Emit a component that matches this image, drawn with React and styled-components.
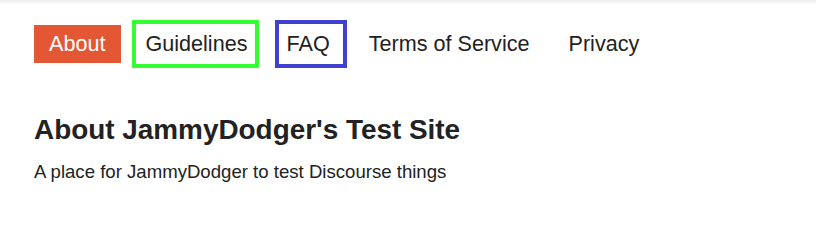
import styled, { createGlobalStyle } from "styled-components";

const GlobalStyle = createGlobalStyle`
  html, body {
    margin: 0;
    padding: 0;
    background: #fff;
  }
  body {
    font-family: "Liberation Sans", Arial, sans-serif;
    color: #222;
  }
`;

const HeaderShadow = styled.div`
  height: 5px;
  background: linear-gradient(rgba(0, 0, 0, 0.07), rgba(0, 0, 0, 0));
`;

const Page = styled.div`
  padding: 15px 34px 0;
`;

const NavPills = styled.ul`
  display: flex;
  align-items: center;
  list-style: none;
  margin: 0;
  padding: 0;
  height: 48px;
`;

const Pill = styled.li`
  margin-left: ${(p) => p.$gap || 0}px;
  a {
    display: flex;
    align-items: center;
    box-sizing: border-box;
    height: ${(p) => (p.$outline ? 48 : 38)}px;
    padding: 0 ${(p) => p.$padR}px 0 ${(p) => p.$padL}px;
    font-size: 21.6px;
    line-height: 1;
    color: ${(p) => (p.$active ? "#fff" : "#222")};
    background: ${(p) => (p.$active ? "#e45735" : "transparent")};
    border: ${(p) => (p.$outline ? `4px solid ${p.$outline}` : "none")};
    text-decoration: none;
  }
`;

const Title = styled.h2`
  margin: 44px 0 0;
  font-size: 27.9px;
  line-height: 35px;
  font-weight: bold;
  color: #222;
`;

const Intro = styled.p`
  margin: 13px 0 0;
  font-size: 18.6px;
  line-height: 24px;
  color: #222;
`;

const links = [
  { label: "About", active: true, padL: 15, padR: 16 },
  { label: "Guidelines", outline: "#33ff33", padL: 9, padR: 8, gap: 11 },
  { label: "FAQ", outline: "#4141cf", padL: 7, padR: 13, gap: 16 },
  { label: "Terms of Service", padL: 0, padR: 0, gap: 22 },
  { label: "Privacy", padL: 0, padR: 0, gap: 39 },
];

export default function App() {
  return (
    <>
      <GlobalStyle />
      <HeaderShadow />
      <Page>
        <NavPills>
          {links.map((l) => (
            <Pill
              key={l.label}
              $active={l.active}
              $outline={l.outline}
              $padL={l.padL}
              $padR={l.padR}
              $gap={l.gap}
            >
              <a href="#">{l.label}</a>
            </Pill>
          ))}
        </NavPills>
        <Title>About JammyDodger's Test Site</Title>
        <Intro>A place for JammyDodger to test Discourse things</Intro>
      </Page>
    </>
  );
}
